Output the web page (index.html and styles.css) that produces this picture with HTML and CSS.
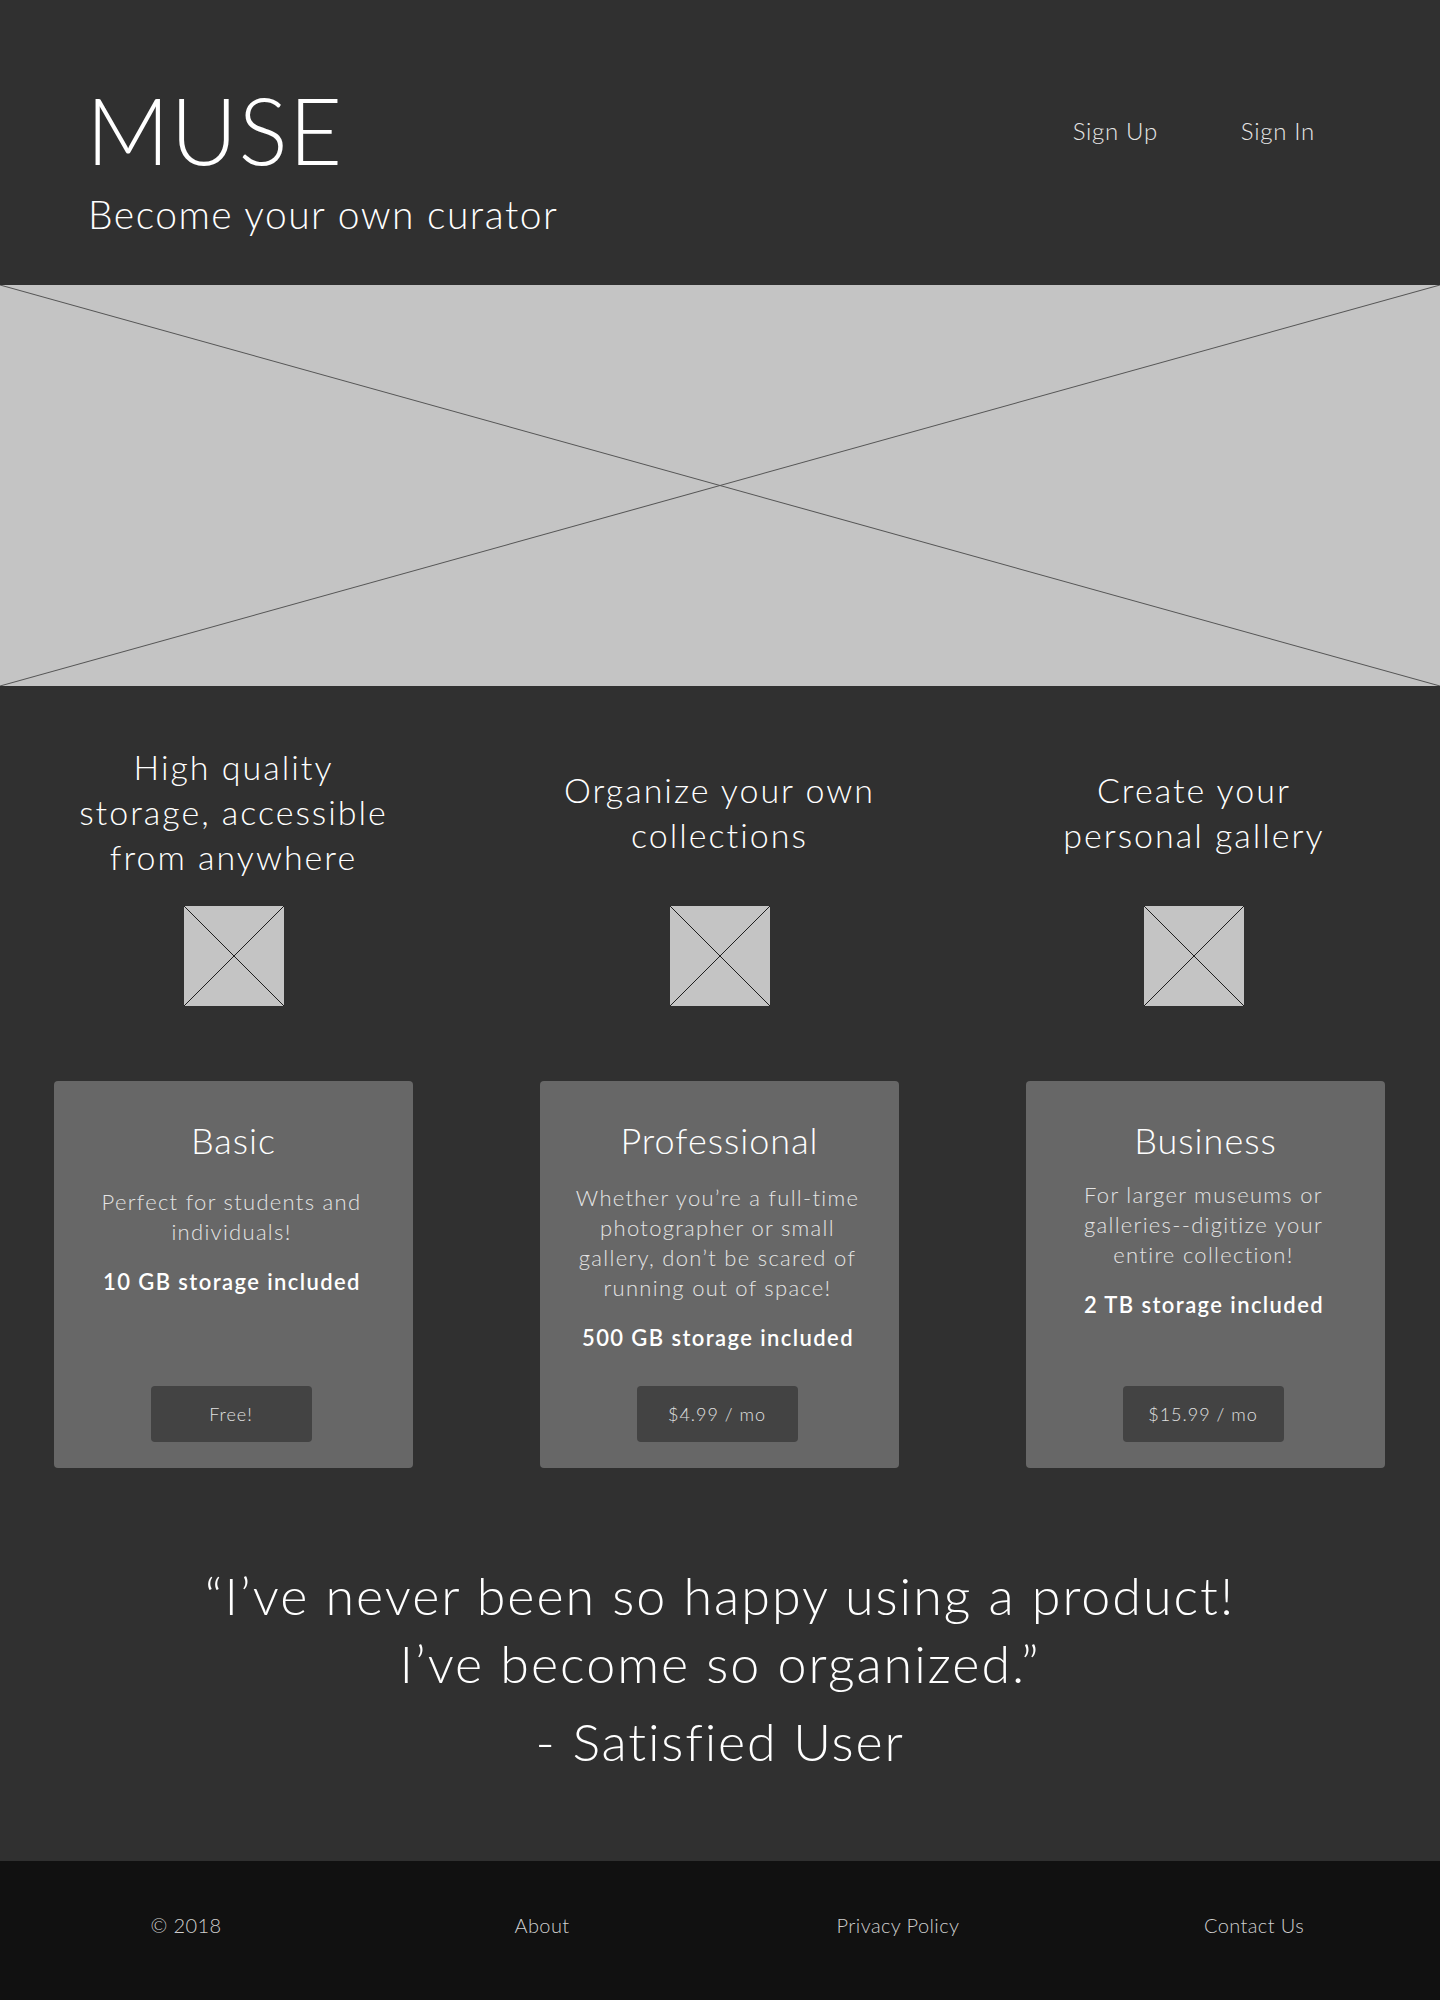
FILE: index.html
```html
<!DOCTYPE html>
<html lang="en">
<head>
<meta charset="utf-8">
<title>Muse</title>
<link rel="stylesheet" href="styles.css">
</head>
<body>
<header class="site-header">
  <div class="brand">
    <h1 class="brand-name">MUSE</h1>
    <p class="brand-tagline">Become your own curator</p>
  </div>
  <nav class="nav">
    <a class="nav-link" href="#">Sign Up</a>
    <a class="nav-link" href="#">Sign In</a>
  </nav>
</header>

<section class="hero">
  <svg class="placeholder-x" viewBox="0 0 100 100" preserveAspectRatio="none">
    <line x1="0" y1="0" x2="100" y2="100" vector-effect="non-scaling-stroke"/>
    <line x1="100" y1="0" x2="0" y2="100" vector-effect="non-scaling-stroke"/>
  </svg>
</section>

<main class="content">
  <section class="features">
    <div class="feature">
      <h2 class="feature-title">High quality<br>storage, accessible<br>from anywhere</h2>
      <div class="thumb">
        <svg class="placeholder-x thumb-x" viewBox="0 0 100 100" preserveAspectRatio="none">
          <line x1="0" y1="0" x2="100" y2="100" vector-effect="non-scaling-stroke"/>
          <line x1="100" y1="0" x2="0" y2="100" vector-effect="non-scaling-stroke"/>
        </svg>
      </div>
    </div>
    <div class="feature">
      <h2 class="feature-title">Organize your own<br>collections</h2>
      <div class="thumb">
        <svg class="placeholder-x thumb-x" viewBox="0 0 100 100" preserveAspectRatio="none">
          <line x1="0" y1="0" x2="100" y2="100" vector-effect="non-scaling-stroke"/>
          <line x1="100" y1="0" x2="0" y2="100" vector-effect="non-scaling-stroke"/>
        </svg>
      </div>
    </div>
    <div class="feature">
      <h2 class="feature-title">Create your<br>personal gallery</h2>
      <div class="thumb">
        <svg class="placeholder-x thumb-x" viewBox="0 0 100 100" preserveAspectRatio="none">
          <line x1="0" y1="0" x2="100" y2="100" vector-effect="non-scaling-stroke"/>
          <line x1="100" y1="0" x2="0" y2="100" vector-effect="non-scaling-stroke"/>
        </svg>
      </div>
    </div>
  </section>

  <section class="plans">
    <div class="plan plan-basic">
      <h3 class="plan-name">Basic</h3>
      <p class="plan-desc">Perfect for students and<br>individuals!</p>
      <p class="plan-storage">10 GB storage included</p>
      <button class="plan-btn">Free!</button>
    </div>
    <div class="plan">
      <h3 class="plan-name">Professional</h3>
      <p class="plan-desc">Whether you’re a full-time<br>photographer or small<br>gallery, don’t be scared of<br>running out of space!</p>
      <p class="plan-storage">500 GB storage included</p>
      <button class="plan-btn">$4.99 / mo</button>
    </div>
    <div class="plan plan-business">
      <h3 class="plan-name">Business</h3>
      <p class="plan-desc">For larger museums or<br>galleries--digitize your<br>entire collection!</p>
      <p class="plan-storage">2 TB storage included</p>
      <button class="plan-btn">$15.99 / mo</button>
    </div>
  </section>

  <section class="testimonial">
    <blockquote class="quote">“I’ve never been so happy using a product!<br>I’ve become so organized.”</blockquote>
    <p class="quote-author">- Satisfied User</p>
  </section>
</main>

<footer class="site-footer">
  <span class="footer-item">© 2018</span>
  <a class="footer-item" href="#">About</a>
  <a class="footer-item" href="#">Privacy Policy</a>
  <a class="footer-item" href="#">Contact Us</a>
</footer>
</body>
</html>
```

FILE: styles.css
```css
* { box-sizing: border-box; }

html, body {
  margin: 0;
  padding: 0;
}

body {
  background: #303030;
  color: #ffffff;
  font-family: "Lato", "Open Sans", "Liberation Sans", sans-serif;
  font-weight: 300;
}

a { color: inherit; text-decoration: none; }

/* Header */
.site-header {
  height: 285px;
  display: flex;
  justify-content: space-between;
  align-items: flex-start;
  padding: 0 125px 0 88px;
}

.brand-name {
  margin: 84px 0 0 -2px;
  font-size: 92px;
  line-height: 1;
  font-weight: 300;
  letter-spacing: 1px;
}

.brand-tagline {
  margin: 19px 0 0 0;
  font-size: 39px;
  line-height: 1;
  font-weight: 300;
  letter-spacing: 1.5px;
}

.nav {
  display: flex;
  gap: 83px;
  margin-top: 119px;
}

.nav-link {
  font-size: 24px;
  line-height: 1;
  color: #e6e6e6;
  letter-spacing: 0.7px;
}

/* Hero placeholder */
.hero {
  height: 401px;
  background: #c4c4c4;
}

.placeholder-x {
  display: block;
  width: 100%;
  height: 100%;
}

.placeholder-x line {
  stroke: #555555;
  stroke-width: 1;
}

/* Features */
.features {
  display: grid;
  grid-template-columns: 359px 359px 336px;
  column-gap: 127px;
  padding: 58px 54px 0;
}

.feature {
  display: flex;
  flex-direction: column;
  align-items: center;
}

.feature-title {
  height: 135px;
  margin: 0;
  display: flex;
  align-items: center;
  justify-content: center;
  text-align: center;
  font-size: 34px;
  line-height: 45px;
  font-weight: 300;
  letter-spacing: 2px;
}

.thumb {
  width: 100px;
  height: 100px;
  margin-top: 27px;
  background: #c4c4c4;
}

.thumb-x line {
  stroke: #1e1e1e;
}

/* Plans */
.plans {
  display: grid;
  grid-template-columns: repeat(3, 359px);
  column-gap: 127px;
  padding: 75px 54px 0;
}

.plan {
  height: 387px;
  background: #676767;
  border-radius: 4px;
  display: flex;
  flex-direction: column;
  align-items: center;
  text-align: center;
  padding: 38px 10px 26px;
}

.plan-name {
  margin: 0;
  font-size: 36px;
  line-height: 43px;
  font-weight: 300;
  letter-spacing: 1px;
}

.plan-desc {
  margin: 21px 4px 0 0;
  font-size: 22px;
  line-height: 30px;
  color: #e4e4e4;
  font-weight: 300;
  letter-spacing: 1.3px;
}

.plan-basic .plan-desc { margin-top: 25px; }
.plan-business .plan-desc { margin-top: 18px; }

.plan-storage {
  margin: 20px 3px 0 0;
  font-size: 22px;
  line-height: 30px;
  font-weight: 600;
  color: #ffffff;
  letter-spacing: 1.4px;
}

.plan-btn {
  margin: auto 5px 0 0;
  width: 161px;
  height: 56px;
  border: none;
  border-radius: 4px;
  background: #434343;
  color: #e0e0e0;
  font-family: inherit;
  font-weight: 300;
  font-size: 18px;
  letter-spacing: 1px;
}

/* Testimonial */
.testimonial {
  text-align: center;
  padding: 93px 0 86px;
}

.quote {
  margin: 0;
  font-size: 52px;
  line-height: 68px;
  font-weight: 300;
  letter-spacing: 2px;
}

.quote-author {
  margin: 10px 0 0;
  font-size: 52px;
  line-height: 68px;
  font-weight: 300;
  letter-spacing: 1.8px;
}

/* Footer */
.site-footer {
  background: #111111;
  display: grid;
  grid-template-columns: repeat(4, 1fr);
  padding: 52px 8px 63px;
}

.footer-item {
  text-align: center;
  font-size: 20px;
  line-height: 24px;
  color: #cfcfcf;
  letter-spacing: 0.4px;
}
```
